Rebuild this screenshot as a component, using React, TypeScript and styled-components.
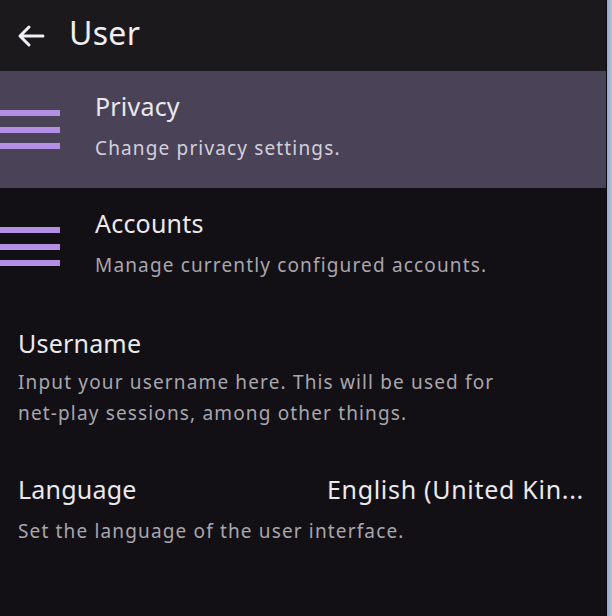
import React from 'react';
import styled, { createGlobalStyle } from 'styled-components';

const GlobalStyle = createGlobalStyle`
  html, body {
    margin: 0;
    padding: 0;
    background: #121014;
  }
  body {
    font-family: 'Noto Sans', 'DejaVu Sans', sans-serif;
  }
`;

interface NavItem {
  title: string;
  description: string;
  selected?: boolean;
}

const navItems: NavItem[] = [
  { title: 'Privacy', description: 'Change privacy settings.', selected: true },
  { title: 'Accounts', description: 'Manage currently configured accounts.' },
];

const MenuIcon = () => (
  <svg width="60" height="40" viewBox="0 0 60 40">
    <rect x="0" y="0" width="60" height="6" fill="#b28fe2" />
    <rect x="0" y="17" width="60" height="6" fill="#b28fe2" />
    <rect x="0" y="33" width="60" height="6" fill="#b28fe2" />
  </svg>
);

const BackArrow = () => (
  <svg width="28" height="24" viewBox="0 0 28 24">
    <path
      d="M26 12 H3 M12 3 L3 12 L12 21"
      stroke="#f2f0f4"
      strokeWidth="3"
      fill="none"
      strokeLinecap="round"
      strokeLinejoin="round"
    />
  </svg>
);

const App = () => {
  return (
    <>
      <GlobalStyle />
      <Page>
        <Main>
          <Header>
            <BackArrow />
            <HeaderTitle>User</HeaderTitle>
          </Header>

          {navItems.map((item) => (
            <NavRow key={item.title} selected={!!item.selected}>
              <IconSlot>
                <MenuIcon />
              </IconSlot>
              <NavText>
                <Title>{item.title}</Title>
                <Description selected={!!item.selected}>{item.description}</Description>
              </NavText>
            </NavRow>
          ))}

          <Setting>
            <Title>Username</Title>
            <Description>
              Input your username here. This will be used for
              <br />
              net-play sessions, among other things.
            </Description>
          </Setting>

          <Setting>
            <SettingHead>
              <Title>Language</Title>
              <Value>English (United Kin...</Value>
            </SettingHead>
            <Description>Set the language of the user interface.</Description>
          </Setting>
        </Main>
        <Edge />
      </Page>
    </>
  );
};

export default App;

const Page = styled.div`
  display: flex;
  width: 612px;
  height: 616px;
  overflow: hidden;
  background: #121014;
`;

const Main = styled.div`
  flex: 1;
  display: flex;
  flex-direction: column;
  border-right: 1px solid #07090f;
`;

const Edge = styled.div`
  width: 5px;
  background: linear-gradient(90deg, #98a9c9, #b3c2de);
`;

const Header = styled.div`
  height: 71px;
  display: flex;
  align-items: center;
  gap: 24px;
  padding-left: 17px;
  background: #1c191d;
  flex-shrink: 0;
`;

const HeaderTitle = styled.div`
  color: #f0eef2;
  font-size: 32px;
  line-height: 36px;
  letter-spacing: 0.3px;
  margin-top: -5px;
`;

const NavRow = styled.div<{ selected: boolean }>`
  height: 117px;
  box-sizing: border-box;
  padding-bottom: 5px;
  display: flex;
  align-items: center;
  flex-shrink: 0;
  background: ${({ selected }) => (selected ? '#4a4358' : 'transparent')};
`;

const IconSlot = styled.div`
  width: 95px;
  display: flex;
  align-items: center;
  margin-top: 5px;
`;

const NavText = styled.div`
  display: flex;
  flex-direction: column;
  gap: 11px;
`;

const Title = styled.div`
  color: #ebe9ee;
  font-size: 25px;
  line-height: 32px;
  letter-spacing: 0.2px;
  white-space: nowrap;
`;

const Description = styled.div<{ selected?: boolean }>`
  color: ${({ selected }) => (selected ? '#d4cfdb' : '#a9a6ae')};
  font-size: 19px;
  line-height: 31px;
  letter-spacing: 1.15px;
  white-space: nowrap;
`;

const Setting = styled.div`
  padding: 22px 22px 0 18px;
  display: flex;
  flex-direction: column;
  gap: 8px;

  & + & {
    padding-top: 44px;
    gap: 11px;
  }
`;

const SettingHead = styled.div`
  display: flex;
  justify-content: space-between;
  align-items: baseline;
`;

const Value = styled.div`
  color: #ebe9ee;
  font-size: 25px;
  line-height: 32px;
  letter-spacing: 0.7px;
  white-space: nowrap;
`;
